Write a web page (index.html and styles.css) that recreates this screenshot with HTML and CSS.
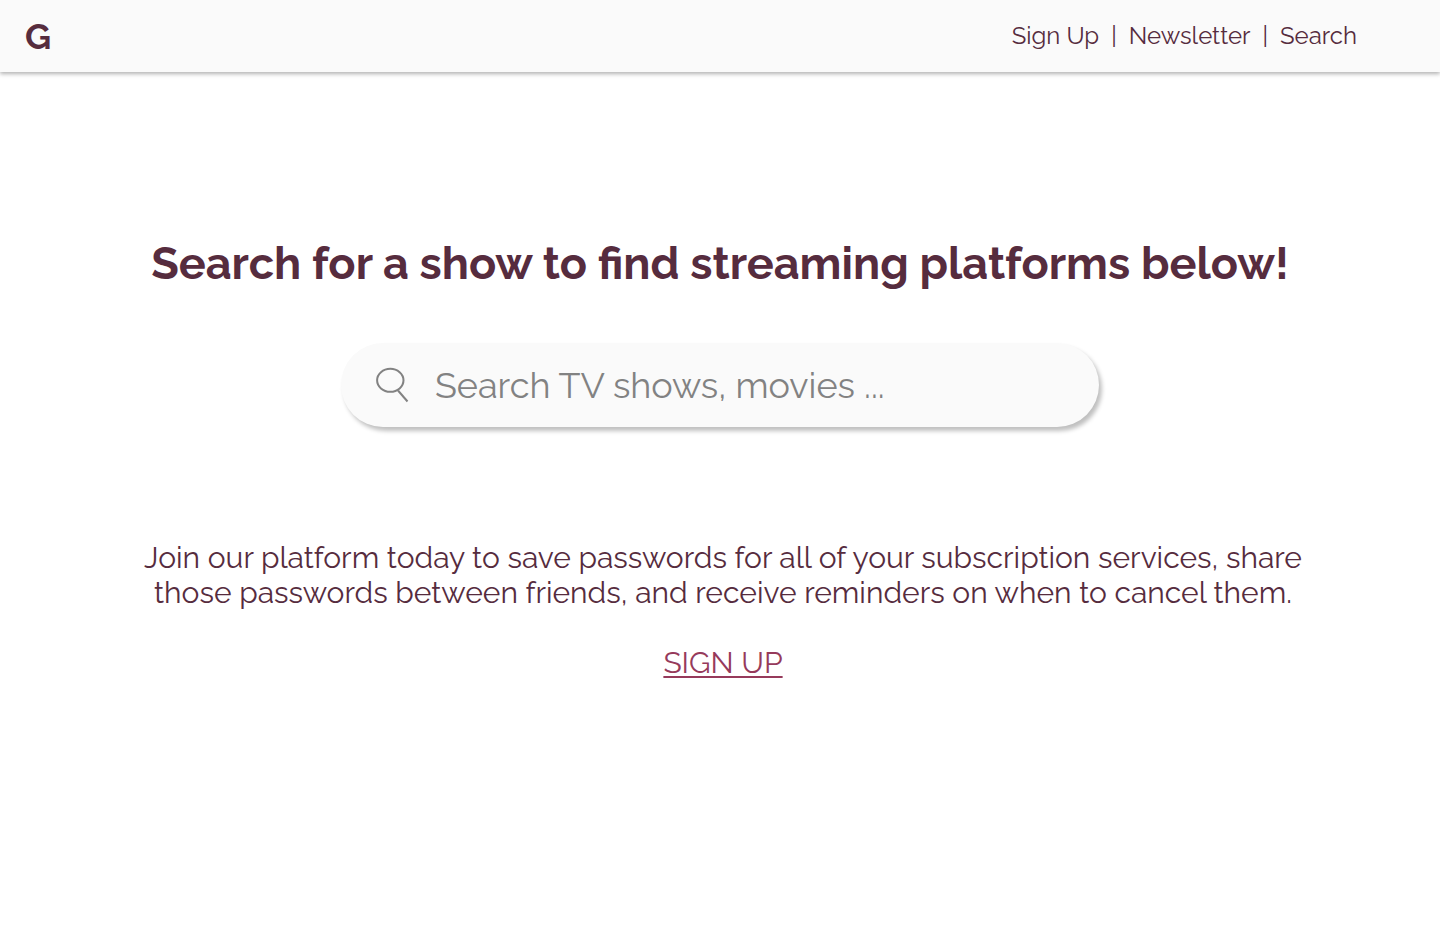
FILE: index.html
```html
<!DOCTYPE html>
<html lang="en">
<head>
<meta charset="utf-8">
<meta name="viewport" content="width=device-width, initial-scale=1">
<title>G</title>
<link rel="stylesheet" href="styles.css">
</head>
<body>
<header class="topbar">
  <a class="logo" href="#">G</a>
  <nav class="nav">
    <a href="#signup">Sign Up</a><span class="divider">|</span><a href="#newsletter">Newsletter</a><span class="divider">|</span><a href="#search">Search</a>
  </nav>
</header>
<main class="page">
  <h1 class="title">Search for a show to find streaming platforms below!</h1>
  <form class="search" role="search">
    <svg class="search-icon" viewBox="0 0 36 36" aria-hidden="true"><ellipse cx="15.300" cy="13.300" rx="13.200" ry="11.500"/><path d="M23 23.500L32.500 34.500"/></svg>
    <input class="search-input" id="search" type="text" aria-label="Search TV shows, movies" placeholder="Search TV shows, movies ...">
  </form>
  <section class="join">
    <p class="pitch">Join our platform today to save passwords for all of your subscription services, share those passwords between friends, and receive reminders on when to cancel them.</p>
    <a class="signup" href="#signup">SIGN UP</a>
  </section>
</main>
</body>
</html>
```
FILE: styles.css
```css
* { box-sizing: border-box; }
body { margin: 0; background: #fff; color: #562c3e; font-family: Raleway, Lato, "Open Sans", sans-serif; }
.topbar { display: flex; align-items: center; justify-content: space-between; min-height: 72px; padding: 0 83px 0 25px; background: #fafafa; box-shadow: 0 2px 4px rgba(0, 0, 0, 0.3); }
.logo { color: inherit; font-size: 36px; line-height: 44px; font-weight: 700; text-decoration: none; }
.nav { display: flex; gap: 12px; font-size: 24px; line-height: 28px; }
.nav a { color: inherit; text-decoration: none; }
.page { display: flex; flex-direction: column; align-items: center; padding: 164px 130px 80px; }
.title { margin: 0; font-size: 45px; line-height: 56px; font-weight: 700; text-align: center; }
.search { display: flex; align-items: center; gap: 24px; width: 100%; max-width: 758px; margin-top: 51px; padding: 0 34px; height: 84px; border-radius: 42px; background: #fafafa; box-shadow: 3px 4px 4px rgba(0, 0, 0, 0.25); }
.search-icon { width: 36px; height: 36px; flex: none; fill: none; stroke: #828282; stroke-width: 2; }
.search-input { flex: 1; min-width: 0; padding: 0; border: 0; outline: 0; background: none; color: inherit; font: inherit; font-size: 36px; line-height: 44px; }
.search-input::placeholder { color: #828282; opacity: 1; }
.join { max-width: 1180px; margin-top: 113px; padding-left: 6px; text-align: center; font-size: 30px; line-height: 35px; }
.pitch { margin: 0 0 35px; }
.signup { color: #963a5b; text-decoration-thickness: 2px; text-underline-offset: 3px; }
```
